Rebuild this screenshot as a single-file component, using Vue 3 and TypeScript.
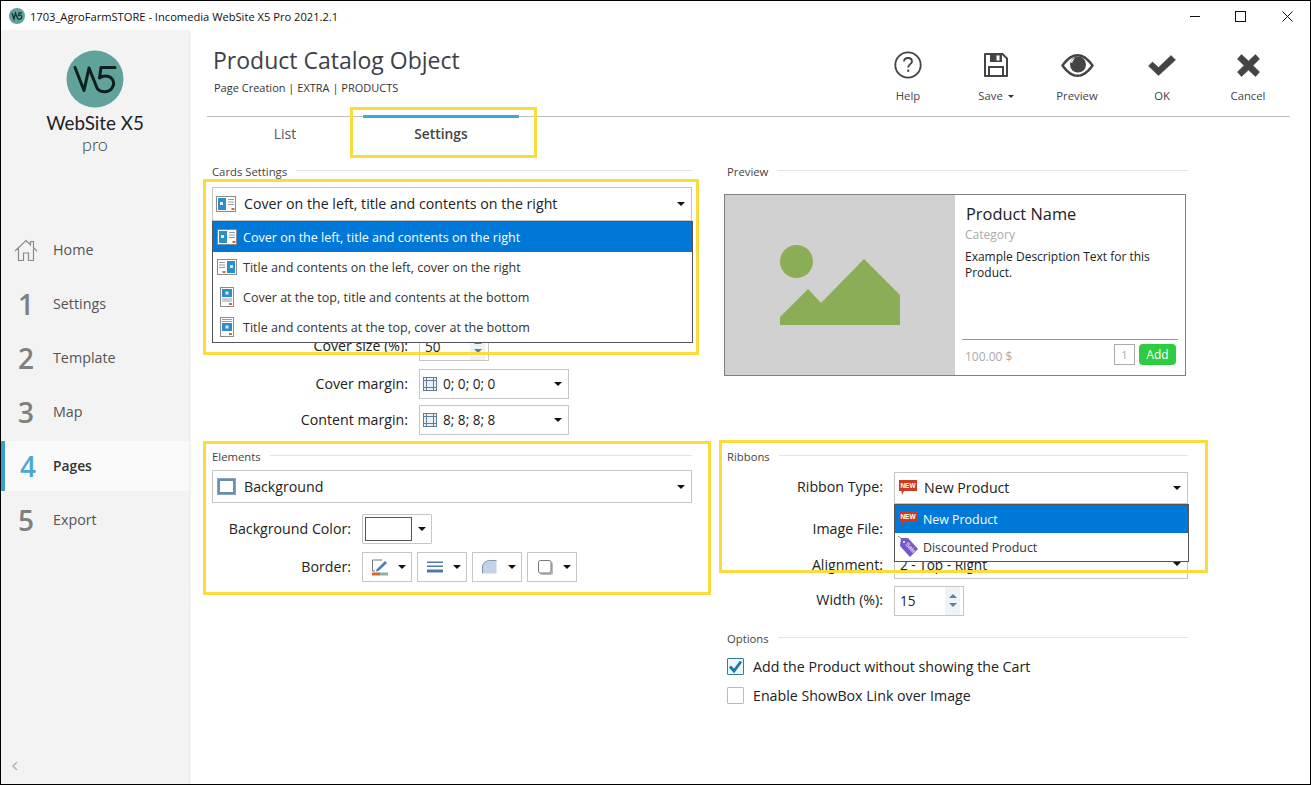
<script setup lang="ts">
interface NavItem { mark: string; label: string; active?: boolean }
interface Tool { label: string; kind: string; caret?: boolean }
interface LayoutOption { label: string; kind: 'left' | 'right' | 'top' | 'bottom' }

const nav: NavItem[] = [
  { mark: '', label: 'Home' },
  { mark: '1', label: 'Settings' },
  { mark: '2', label: 'Template' },
  { mark: '3', label: 'Map' },
  { mark: '4', label: 'Pages', active: true },
  { mark: '5', label: 'Export' },
]
const tools: Tool[] = [
  { label: 'Help', kind: 'help' },
  { label: 'Save', kind: 'save', caret: true },
  { label: 'Preview', kind: 'eye' },
  { label: 'OK', kind: 'ok' },
  { label: 'Cancel', kind: 'cancel' },
]
const layouts: LayoutOption[] = [
  { label: 'Cover on the left, title and contents on the right', kind: 'left' },
  { label: 'Title and contents on the left, cover on the right', kind: 'right' },
  { label: 'Cover at the top, title and contents at the bottom', kind: 'top' },
  { label: 'Title and contents at the top, cover at the bottom', kind: 'bottom' },
]
const margins: { label: string; value: string }[] = [
  { label: 'Cover margin:', value: '0; 0; 0; 0' },
  { label: 'Content margin:', value: '8; 8; 8; 8' },
]
</script>

<template>
  <div class="window">
    <header class="titlebar">
      <svg class="app-icon" width="16" height="16" viewBox="0 0 16 16">
        <circle cx="8" cy="8" r="8" fill="#5fa39a" />
        <path d="M3 5 L5 11 L6.5 5 L8.6 10.4 C9.5 11.6 12.8 11.4 12.8 9 C12.8 7.2 10.8 6.6 9.6 7.4 L10 4.8 H13" fill="none" stroke="#12302c" stroke-width="1.2" />
      </svg>
      <span class="app-title">1703_AgroFarmSTORE - Incomedia WebSite X5 Pro 2021.2.1</span>
      <div class="win-controls">
        <svg width="10" height="10" viewBox="0 0 10 10" class="wc wc-min"><path d="M0 5.5H10" stroke="#111" stroke-width="1" /></svg>
        <svg width="11" height="11" viewBox="0 0 11 11" class="wc wc-max"><rect x="0.5" y="0.5" width="10" height="10" fill="none" stroke="#111" /></svg>
        <svg width="11" height="11" viewBox="0 0 11 11" class="wc wc-close"><path d="M0.5 0.5L10.5 10.5M10.5 0.5L0.5 10.5" stroke="#111" stroke-width="1" /></svg>
      </div>
    </header>

    <div class="body">
      <aside class="sidebar">
        <div class="brand">
          <svg width="58" height="58" viewBox="0 0 58 58">
            <circle cx="29" cy="29" r="28.5" fill="#5fa39a" />
            <path d="M9 17.5 L18 40.5 L23 18 L31 38 C34 43 43 43 46 38 C50 32 46 26 39 26 C37 26 35 27 33.5 28 L35 17.5 H49" fill="none" stroke="#0f1f1e" stroke-width="3" stroke-linejoin="round" stroke-linecap="round" />
          </svg>
          <div class="brand-name">WebSite X5</div>
          <div class="brand-sub">pro</div>
        </div>
        <nav class="nav">
          <div v-for="item in nav" :key="item.label" class="nav-row" :class="{ active: item.active }">
            <span class="nav-mark">
              <svg v-if="!item.mark" width="24" height="23" viewBox="0 0 24 23">
                <path d="M1 12 L12 1.5 L16.5 5.8 V2.5 H19.5 V8.6 L23 12 M4.5 9.5 V21.5 H9.5 V14 H14.5 V21.5 H19.5 V9.5" fill="none" stroke="#8a8a8a" stroke-width="1.2" />
              </svg>
              <template v-else>{{ item.mark }}</template>
            </span>
            <span class="nav-label">{{ item.label }}</span>
          </div>
        </nav>
        <svg class="collapse" width="8" height="10" viewBox="0 0 8 10"><path d="M6 1 L2 5 L6 9" fill="none" stroke="#b5b5b5" stroke-width="1.6" /></svg>
      </aside>

      <main class="main">
        <div class="head">
          <div class="head-text">
            <h1>Product Catalog Object</h1>
            <p>Page Creation | EXTRA | PRODUCTS</p>
          </div>
          <div class="toolbar">
            <div v-for="tool in tools" :key="tool.label" class="tool">
              <span class="tool-icon">
                <svg v-if="tool.kind === 'help'" width="30" height="30" viewBox="0 0 30 30">
                  <circle cx="15" cy="15" r="12.7" fill="none" stroke="#444" stroke-width="1.8" />
                  <path d="M11 11.6 C11 8.8 13 8 15 8 C17.4 8 19 9.4 19 11.4 C19 14 15.2 14.4 15.2 17.6" fill="none" stroke="#444" stroke-width="1.8" />
                  <rect x="14.2" y="19.6" width="2" height="2.2" fill="#444" />
                </svg>
                <svg v-else-if="tool.kind === 'save'" width="24" height="24" viewBox="0 0 24 24">
                  <path d="M1 1 H18.5 L23 5.5 V23 H1 Z" fill="none" stroke="#444" stroke-width="2" stroke-linejoin="round" />
                  <path d="M6 1 H18 V9 H6 Z" fill="#444" />
                  <rect x="12.5" y="2.5" width="3" height="5" fill="#fff" />
                  <path d="M5 23 V14 H19 V23" fill="none" stroke="#444" stroke-width="2" />
                </svg>
                <svg v-else-if="tool.kind === 'eye'" width="33" height="23" viewBox="0 0 33 23">
                  <path fill-rule="evenodd" d="M0 11.5 C6 3 11 0 16.5 0 C22 0 27 3 33 11.5 C27 20 22 23 16.5 23 C11 23 6 20 0 11.5 Z M3 11.5 C7.5 17.5 12 20.6 16.5 20.6 C21 20.6 25.5 17.5 30 11.5 C25.5 5.5 21 2.4 16.5 2.4 C12 2.4 7.5 5.5 3 11.5 Z" fill="#444" />
                  <circle cx="17" cy="10.5" r="8" fill="#444" />
                  <path d="M9.6 8 C10.5 5.6 12.3 4.4 14.6 4 C12.6 5.4 11.6 6.8 11.2 9.2 Z" fill="#fff" />
                </svg>
                <svg v-else-if="tool.kind === 'ok'" width="28" height="21" viewBox="0 0 28 21">
                  <path d="M0.5 11 L4.5 7 L10.5 12.5 L23 0.5 L27.5 5 L10.5 20.5 Z" fill="#444" stroke="#444" stroke-width="0.6" stroke-linejoin="round" />
                </svg>
                <svg v-else width="23" height="23" viewBox="0 0 23 23">
                  <path d="M4.5 0.5 L11.5 7 L18.5 0.5 L22.5 5 L16 11.5 L22.5 18 L18.5 22.5 L11.5 16 L4.5 22.5 L0.5 18 L7 11.5 L0.5 5 Z" fill="#444" stroke="#444" stroke-width="0.6" stroke-linejoin="round" />
                </svg>
              </span>
              <span class="tool-label">{{ tool.label }}<i v-if="tool.caret" class="mini-caret"></i></span>
            </div>
          </div>
        </div>

        <div class="tabs">
          <div class="tab">List</div>
          <div class="tab current">
            Settings
            <span class="mark mark-tab"></span>
          </div>
        </div>

        <div class="content">
          <section class="col col-left">
            <div class="group-title"><span>Cards Settings</span></div>
            <div class="select select-cards">
              <svg class="layout-icon" width="20" height="16" viewBox="0 0 20 16">
                <rect x="0.5" y="0.5" width="19" height="15" fill="#fff" stroke="#8b8b8b" />
                <rect x="2" y="2" width="8" height="12" fill="#2d8fc9" />
                <rect x="4" y="6" width="3" height="3" fill="#d9eef7" />
                <path d="M12 3.5H18M12 6H18M12 8.5H18" stroke="#9a9a9a" />
                <rect x="15.5" y="12" width="3" height="2" fill="#d4683a" />
              </svg>
              <span class="select-text lift">Cover on the left, title and contents on the right</span>
              <i class="caret"></i>
              <div class="dropdown">
                <div v-for="(opt, i) in layouts" :key="opt.kind" class="drop-item" :class="{ on: i === 0 }">
                  <svg v-if="opt.kind === 'left'" class="opt-icon" width="20" height="16" viewBox="0 0 20 16">
                    <rect x="0.5" y="0.5" width="19" height="15" fill="#fff" stroke="#8b8b8b" />
                    <rect x="2" y="2" width="8" height="12" fill="#2d8fc9" />
                    <rect x="4" y="6" width="3" height="3" fill="#d9eef7" />
                    <path d="M12 3.5H18M12 6H18M12 8.5H18" stroke="#9a9a9a" />
                    <rect x="15.5" y="12" width="3" height="2" fill="#d4683a" />
                  </svg>
                  <svg v-else-if="opt.kind === 'right'" class="opt-icon" width="20" height="16" viewBox="0 0 20 16">
                    <rect x="0.5" y="0.5" width="19" height="15" fill="#fff" stroke="#8b8b8b" />
                    <rect x="10" y="2" width="8" height="12" fill="#2d8fc9" />
                    <rect x="13" y="6" width="3" height="3" fill="#d9eef7" />
                    <path d="M2 3.5H8M2 6H8M2 8.5H8" stroke="#9a9a9a" />
                    <rect x="5.5" y="12" width="3" height="2" fill="#d4683a" />
                  </svg>
                  <svg v-else-if="opt.kind === 'top'" class="opt-icon opt-tall" width="14" height="20" viewBox="0 0 14 20">
                    <rect x="0.5" y="0.5" width="13" height="19" fill="#fff" stroke="#8b8b8b" />
                    <rect x="2" y="2" width="10" height="8" fill="#2d8fc9" />
                    <rect x="5.5" y="4.5" width="3" height="3" fill="#d9eef7" />
                    <path d="M2 12H12M2 14H12" stroke="#9a9a9a" />
                    <rect x="9" y="16" width="3" height="2" fill="#d4683a" />
                  </svg>
                  <svg v-else class="opt-icon opt-tall" width="14" height="20" viewBox="0 0 14 20">
                    <rect x="0.5" y="0.5" width="13" height="19" fill="#fff" stroke="#8b8b8b" />
                    <path d="M2 2.5H12M2 4.5H12" stroke="#9a9a9a" />
                    <rect x="2" y="6" width="10" height="8" fill="#2d8fc9" />
                    <rect x="5.5" y="8.5" width="3" height="3" fill="#d9eef7" />
                    <rect x="9" y="16" width="3" height="2" fill="#d4683a" />
                  </svg>
                  <span>{{ opt.label }}</span>
                </div>
              </div>
              <span class="mark mark-cards"></span>
            </div>

            <div class="form-row form-row-first">
              <label class="lbl lbl-wide">Cover size (%):</label>
              <div class="spin">
                <span class="spin-val">50</span>
                <span class="spin-btns"><i class="up"></i><i class="down"></i></span>
              </div>
            </div>
            <div v-for="m in margins" :key="m.label" class="form-row">
              <label class="lbl lbl-wide">{{ m.label }}</label>
              <div class="combo">
                <svg width="14" height="14" viewBox="0 0 14 14">
                  <rect x="0.5" y="0.5" width="13" height="13" fill="#eaf0f5" stroke="#5d7d99" />
                  <path d="M3.5 0V14M10.5 0V14M0 3.5H14M0 10.5H14" stroke="#5d7d99" />
                </svg>
                <span class="lift">{{ m.value }}</span>
                <i class="caret"></i>
              </div>
            </div>

            <div class="elements">
              <div class="group-title"><span>Elements</span></div>
              <div class="select select-elements">
                <span class="bg-icon"></span>
                <span class="select-text">Background</span>
                <i class="caret"></i>
              </div>
              <div class="form-row form-row-bg">
                <label class="lbl lbl-narrow">Background Color:</label>
                <div class="color-btn"><span class="swatch"></span><i class="caret"></i></div>
              </div>
              <div class="form-row form-row-border">
                <label class="lbl lbl-narrow">Border:</label>
                <div class="border-btn">
                  <svg width="18" height="18" viewBox="0 0 18 18">
                    <path d="M1.5 13 V2 H11" fill="none" stroke="#777" />
                    <path d="M1.5 13 H4" stroke="#777" />
                    <path d="M5.5 11.5 L14 3 L16 5 L7.5 13 L5 13.5 Z" fill="#4d7fb0" />
                    <rect x="1" y="14.5" width="8" height="3" fill="#cc6a3a" />
                    <rect x="9" y="14.5" width="8" height="3" fill="#8fb0a8" />
                  </svg>
                  <i class="caret"></i>
                </div>
                <div class="border-btn">
                  <svg width="18" height="18" viewBox="0 0 18 18">
                    <rect x="1" y="3.5" width="16" height="1.5" fill="#4d7aa5" />
                    <rect x="1" y="7.5" width="16" height="1.5" fill="#4d7aa5" />
                    <rect x="1" y="11.5" width="16" height="3" fill="#4d7aa5" />
                  </svg>
                  <i class="caret"></i>
                </div>
                <div class="border-btn">
                  <svg width="18" height="18" viewBox="0 0 18 18">
                    <path d="M1.5 15.5 V9 C1.5 5 5 2.5 9 2.5 H15.5 V15.5 Z" fill="#c2d3e6" />
                    <path d="M1.5 15.5 V9 C1.5 5 5 2.5 9 2.5 H15.5" fill="none" stroke="#7f97b0" />
                  </svg>
                  <i class="caret"></i>
                </div>
                <div class="border-btn">
                  <svg width="18" height="18" viewBox="0 0 18 18">
                    <rect x="4" y="4" width="13" height="13" rx="2" fill="#bbb" />
                    <rect x="2.5" y="2.5" width="12.5" height="12.5" rx="2" fill="#fff" stroke="#777" />
                  </svg>
                  <i class="caret"></i>
                </div>
              </div>
              <span class="mark mark-elements"></span>
            </div>
          </section>

          <section class="col col-right">
            <div class="group-title"><span>Preview</span></div>
            <div class="card">
              <div class="card-media">
                <svg width="120" height="82" viewBox="0 0 120 82">
                  <circle cx="16.5" cy="16.5" r="16.5" fill="#8bad55" />
                  <path d="M0 80 V72 L28 44 L41 58 L84 14 L120 50 V80 Z" fill="#8bad55" />
                </svg>
              </div>
              <div class="card-body">
                <div class="card-name">Product Name</div>
                <div class="card-cat">Category</div>
                <div class="card-desc">Example Description Text for this Product.</div>
                <div class="card-foot">
                  <span class="card-price">100.00 $</span>
                  <span class="card-qty">1</span>
                  <span class="card-add">Add</span>
                </div>
              </div>
            </div>

            <div class="ribbons">
              <div class="group-title"><span>Ribbons</span></div>
              <div class="r-row r-type">
                <label class="lbl lbl-right lbl-top">Ribbon Type:</label>
                <div class="select select-ribbon">
                  <svg width="20" height="18" viewBox="0 0 20 18" class="ribbon-svg">
                    <path d="M1 1 H19 V12 H6 L4 16 L3.5 12 H1 Z" fill="#cc3a22" />
                    <text x="10" y="9.4" text-anchor="middle" class="new-text">NEW</text>
                  </svg>
                  <span class="select-text lift">New Product</span>
                  <i class="caret"></i>
                  <div class="dropdown dropdown-ribbon">
                    <div class="drop-item drop-r on">
                      <svg width="20" height="18" viewBox="0 0 20 18" class="ribbon-svg">
                        <path d="M1 1 H19 V12 H6 L4 16 L3.5 12 H1 Z" fill="#cc3a22" />
                        <text x="10" y="9.4" text-anchor="middle" class="new-text">NEW</text>
                      </svg>
                      <span>New Product</span>
                    </div>
                    <div class="drop-item drop-r">
                      <svg width="20" height="22" viewBox="0 0 20 22" class="ribbon-svg">
                        <path d="M0 0 L4 3" stroke="#888" />
                        <path d="M3 2 H10 L20 13 L12 21 L2 10 Z" fill="#7557c9" />
                        <circle cx="6" cy="6" r="1" fill="#fff" />
                        <text x="11" y="13" text-anchor="middle" transform="rotate(48 11 13)" class="sale-text">Sale</text>
                      </svg>
                      <span>Discounted Product</span>
                    </div>
                  </div>
                </div>
              </div>
              <div class="r-row r-image"><label class="lbl lbl-right">Image File:</label></div>
              <div class="r-row r-align">
                <label class="lbl lbl-right">Alignment:</label>
                <div class="select select-align">
                  <span class="align-text">2 - Top - Right</span>
                  <i class="caret"></i>
                </div>
              </div>
              <div class="r-row r-width">
                <label class="lbl lbl-right">Width (%):</label>
                <div class="spin">
                  <span class="spin-val">15</span>
                  <span class="spin-btns"><i class="up"></i><i class="down"></i></span>
                </div>
              </div>
              <span class="mark mark-ribbons"></span>
            </div>

            <div class="options">
              <div class="group-title"><span>Options</span></div>
              <div class="check-row check-first">
                <span class="check checked">
                  <svg width="15" height="15" viewBox="0 0 15 15"><path d="M2 7.5 L6 12 L13 2.5" fill="none" stroke="#1b7a9c" stroke-width="2.8" /></svg>
                </span>
                <span>Add the Product without showing the Cart</span>
              </div>
              <div class="check-row">
                <span class="check"></span>
                <span>Enable ShowBox Link over Image</span>
              </div>
            </div>
          </section>
        </div>
      </main>
    </div>
  </div>
</template>

<style>
html, body { margin: 0; padding: 0; background: #fff; overflow: hidden; }
</style>

<style scoped>
* { box-sizing: border-box; }
.window {
  width: 1311px; height: 785px; border: 1px solid #000; background: #fff;
  display: flex; flex-direction: column; overflow: hidden;
  font-family: "Open Sans", "Noto Sans", sans-serif; font-size: 14.2px; color: #222;
}
.titlebar { height: 30px; flex: none; display: flex; align-items: center; padding-left: 8px; position: relative; }
.app-icon { flex: none; }
.app-title { margin-left: 5px; font-size: 11.15px; color: #111; }
.win-controls { margin-left: auto; display: flex; align-items: center; padding-right: 17px; }
.wc-max { margin-left: 35px; }
.wc-close { margin-left: 36px; }

.body { flex: 1; display: flex; min-height: 0; }
.sidebar { width: 188px; flex: none; background: #f3f3f3; box-shadow: 1px 0 2px #e4e4e4; position: relative; display: flex; flex-direction: column; }
.brand { display: flex; flex-direction: column; align-items: center; padding-top: 19px; height: 194px; }
.brand-name { font-family: Lato, sans-serif; font-size: 18.8px; color: #222; line-height: 24px; margin-top: 3px; }
.brand-sub { font-family: Lato, sans-serif; font-weight: 300; font-size: 18px; color: #444; line-height: 18px; }
.nav { display: flex; flex-direction: column; gap: 4px; }
.nav-row { height: 50px; display: flex; align-items: center; }
.nav-row.active { background: #fafafa; border-left: 4px solid #3a9fc9; }
.nav-mark { width: 52px; flex: none; display: flex; justify-content: center; padding-right: 2px; font-size: 28px; font-weight: 600; color: #808080; }
.nav-row.active .nav-mark { width: 48px; color: #4ba8d4; padding-right: 0; transform: translateX(-1px); }
.nav-label { font-size: 14.3px; color: #555; margin-top: -2px; }
.nav-row.active .nav-label { color: #333; font-size: 13.8px; font-weight: 600; }
.collapse { position: absolute; left: 10px; bottom: 13px; }

.main { flex: 1; min-width: 0; display: flex; flex-direction: column; }
.head { height: 86px; flex: none; margin-left: 18px; width: 1083px; border-bottom: 1px solid #bdbdbd; display: flex; position: relative; }
.head-text { padding: 13px 0 0 6px; width: 640px; flex: none; }
h1 { margin: 0; font-size: 23px; line-height: 32px; font-weight: 400; color: #3c4148; }
.head-text p { margin: 4px 0 0 1px; font-size: 11px; line-height: 16px; color: #333; }
.toolbar { display: grid; grid-template-columns: 86px 90px 72px 98px 74px; margin-left: 18px; }
.tool { display: flex; flex-direction: column; align-items: center; padding-top: 19px; }
.tool-icon { height: 30px; display: flex; align-items: center; justify-content: center; }
.tool-label { margin-top: 8px; font-size: 11.3px; line-height: 16px; color: #444; white-space: nowrap; }
.mini-caret { display: inline-block; margin-left: 5px; border: 3px solid transparent; border-top: 3px solid #333; border-bottom: 0; vertical-align: middle; }

.tabs { display: flex; margin-left: 18px; height: 33px; margin-top: -2px; flex: none; }
.tab { width: 156px; padding-top: 1px; border-top: 3px solid transparent; text-align: center; line-height: 30px; font-size: 14px; color: #555; position: relative; }
.tab.current { border-top-color: #3ea8d8; font-size: 13.8px; font-weight: 600; color: #444; }

.content { display: flex; gap: 35px; padding: 15px 0 0 23px; }
.col { flex: none; }
.col-left { width: 480px; }
.col-right { width: 461px; }
.group-title { height: 16px; display: flex; align-items: center; gap: 9px; font-size: 11.3px; color: #444; }
.group-title::after { content: ""; flex: 1; height: 1px; background: #e4e4e4; margin-top: -1px; }

.lift { margin-top: -2px; }
.select { position: relative; border: 1px solid #c6c6c6; background: #fff; display: flex; align-items: center; }
.select-text { font-size: 14.2px; color: #222; }
.caret { display: block; width: 0; height: 0; border: 4px solid transparent; border-top: 4px solid #111; border-bottom: 0; }
.select > .caret { position: absolute; right: 6px; top: 50%; margin-top: -2px; }
.select-cards { margin-top: 8px; height: 34px; padding-left: 3px; }
.layout-icon { margin-right: 8px; }
.dropdown { position: absolute; z-index: 5; left: -1px; right: -2px; top: 33px; background: #fff; border: 1px solid #555; padding: 0; }
.drop-item { height: 30px; display: flex; align-items: center; font-size: 12.55px; color: #333; position: relative; padding-left: 30px; }
.drop-item.on { background: #0078d7; color: #fff; }
.opt-icon { position: absolute; left: 4px; top: 7px; }
.opt-tall { left: 7px; top: 5px; }

.form-row { display: flex; align-items: center; gap: 11px; height: 30px; margin-top: 6px; }
.form-row-first { margin-top: 109px; margin-bottom: 7px; height: 32px; }
.form-row-first + .form-row { margin-top: 0; }
.lbl { font-size: 14.2px; color: #222; text-align: right; flex: none; white-space: nowrap; margin-top: -2px; }
.lbl-top { margin-top: -4px; }
.lbl-wide { width: 196px; }
.lbl-narrow { width: 139px; }
.lbl-right { width: 156px; }
.spin { width: 70px; height: 30px; border: 1px solid #c6c6c6; background: #fff; display: flex; align-items: center; justify-content: space-between; padding-left: 5px; }
.spin-val { font-size: 13.6px; }
.spin-btns { width: 15px; height: 28px; margin-right: 3px; background: #f0f3f6; display: flex; flex-direction: column; align-items: center; justify-content: center; gap: 5px; }
.up { border: 4px solid transparent; border-bottom: 4px solid #5b7fa5; border-top: 0; }
.down { border: 4px solid transparent; border-top: 4px solid #5b7fa5; border-bottom: 0; }
.combo { width: 150px; height: 30px; border: 1px solid #c6c6c6; display: flex; align-items: center; padding-left: 3px; gap: 6px; position: relative; font-size: 13.6px; }
.combo .caret { position: absolute; right: 6px; top: 12px; }

.elements { position: relative; margin-top: 13px; }
.select-elements { margin-top: 6px; height: 33px; padding-left: 4px; }
.bg-icon { width: 19px; height: 17px; border: 3px solid #6a8fb0; background: #fff; margin-right: 8px; outline: 1px solid #8aa6bf; outline-offset: -1px; }
.form-row-bg { margin-top: 11px; }
.form-row-border { margin-top: 8px; height: 30px; gap: 5px; }
.form-row-border .lbl { margin-right: 6px; }
.color-btn { width: 70px; height: 30px; border: 1px solid #c6c6c6; padding-left: 2px; display: flex; align-items: center; gap: 6px; border-radius: 1px; }
.swatch { width: 47px; height: 24px; border: 1px solid #555; background: #fff; }
.border-btn { width: 50px; height: 30px; border: 1px solid #c6c6c6; display: flex; align-items: center; gap: 9px; padding-left: 8px; }

.card { margin: 15px 0 0 -3px; width: 462px; height: 182px; border: 1px solid #808080; display: flex; }
.card-media { width: 230px; flex: none; background: #d1d1d1; padding: 50px 0 0 55px; }
.card-body { flex: 1; position: relative; padding: 8px 8px 0 10px; display: flex; flex-direction: column; }
.card-name { font-size: 16.4px; line-height: 22px; color: #222; padding-left: 1px; }
.card-cat { font-size: 12px; line-height: 18px; color: #aaa; margin-top: 1px; }
.card-desc { font-size: 12px; line-height: 16px; color: #222; margin-top: 5px; }
.card-foot { margin: auto -1px 0 -3px; height: 36px; border-top: 1px solid #999; display: flex; align-items: flex-start; padding-top: 4px; position: relative; }
.card-price { font-size: 12px; color: #aaa; line-height: 24px; margin: 1px 0 0 3px; }
.card-qty { margin-left: auto; width: 21px; height: 21px; border: 1px solid #aaa; text-align: center; font-size: 11px; line-height: 19px; color: #aaa; }
.card-add { margin: 0 2px 0 4px; width: 37px; height: 21px; background: #2ecc40; color: #fff; border-radius: 4px; text-align: center; font-size: 12px; line-height: 22px; }

.ribbons { position: relative; margin-top: 72px; }
.r-row { display: flex; align-items: center; gap: 11px; }
.r-type { margin-top: 8px; height: 32px; }
.select-ribbon { flex: 1; height: 32px; padding-left: 3px; }
.ribbon-svg { flex: none; margin-right: 6px; }
.new-text { font-family: "Liberation Sans", sans-serif; font-size: 6.5px; font-weight: 700; fill: #fff; }
.sale-text { font-family: "Liberation Sans", sans-serif; font-size: 6px; fill: #fff; }
.dropdown-ribbon { top: 31px; }
.drop-r { height: 28px; padding-left: 3px; font-size: 12.4px; }
.drop-r .ribbon-svg { margin-right: 5px; }
.r-image { height: 34px; margin-top: 8px; }
.r-align { height: 30px; margin-top: 3px; }
.r-align .lbl { margin-top: 0; }
.select-align { flex: 1; height: 30px; padding-left: 5px; }
.align-text { font-size: 13.6px; }
.r-width { height: 29px; margin-top: 7px; }
.options { margin-top: 15px; }
.check-row { display: flex; align-items: center; gap: 9px; height: 17px; margin-top: 12px; font-size: 14.2px; color: #222; }
.check { width: 17px; height: 17px; flex: none; border: 1px solid #bbb; background: #fff; display: flex; align-items: center; justify-content: center; border-radius: 1px; }
.check.checked { border-color: #2a7f9f; background: #eef7fb; }

.mark { position: absolute; border: 3px solid #fbdc3d; z-index: 8; pointer-events: none; }
.mark-tab { top: -11px; left: -13px; right: -18px; height: 51px; }
.mark-cards { left: -10px; right: -8px; top: -9px; height: 176px; }
.mark-elements { left: -9px; right: -19px; top: -7px; bottom: -13px; }
.mark-ribbons { left: -8px; right: -20px; top: -8px; height: 133px; }
</style>
